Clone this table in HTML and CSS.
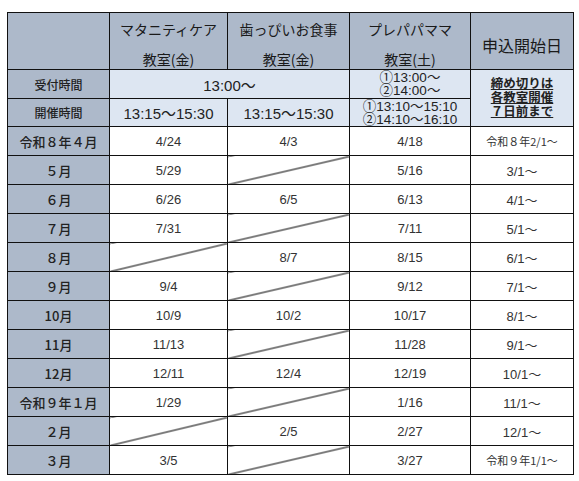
FILE: index.html
```html
<!DOCTYPE html>
<html lang="ja">
<head>
<meta charset="utf-8">
<link rel="stylesheet" href="styles.css">
</head>
<body>
<table class="sched">
  <colgroup>
    <col class="c1"><col class="c2"><col class="c3"><col class="c4"><col class="c5">
  </colgroup>
  <thead>
    <tr class="hrow">
      <th class="hd"></th>
      <th class="hd"><div class="hl">マタニティケア</div><div class="hl">教室(金)</div></th>
      <th class="hd"><div class="hl">歯っぴいお食事</div><div class="hl">教室(金)</div></th>
      <th class="hd"><div class="hl">プレパパママ</div><div class="hl">教室(土)</div></th>
      <th class="hd big"><div class="hl">申込開始日</div></th>
    </tr>
  </thead>
  <tbody>
    <tr class="r1">
      <th class="lab sm">受付時間</th>
      <td class="lt time" colspan="2">13:00〜</td>
      <td class="lt two">①13:00〜<br>②14:00〜</td>
      <td class="lt note" rowspan="2"><span>締め切りは<br>各教室開催<br>７日前まで</span></td>
    </tr>
    <tr class="r2">
      <th class="lab sm">開催時間</th>
      <td class="lt time">13:15〜15:30</td>
      <td class="lt time">13:15〜15:30</td>
      <td class="lt two">①13:10〜15:10<br>②14:10〜16:10</td>
    </tr>
    <tr class="m"><th class="lab">令和８年４月</th><td>4/24</td><td>4/3</td><td>4/18</td><td class="ja">令和８年2/1〜</td></tr>
    <tr class="m"><th class="lab">５月</th><td>5/29</td><td class="na"></td><td>5/16</td><td>3/1〜</td></tr>
    <tr class="m"><th class="lab">６月</th><td>6/26</td><td>6/5</td><td>6/13</td><td>4/1〜</td></tr>
    <tr class="m"><th class="lab">７月</th><td>7/31</td><td class="na"></td><td>7/11</td><td>5/1〜</td></tr>
    <tr class="m"><th class="lab">８月</th><td class="na"></td><td>8/7</td><td>8/15</td><td>6/1〜</td></tr>
    <tr class="m"><th class="lab">９月</th><td>9/4</td><td class="na"></td><td>9/12</td><td>7/1〜</td></tr>
    <tr class="m"><th class="lab">10月</th><td>10/9</td><td>10/2</td><td>10/17</td><td>8/1〜</td></tr>
    <tr class="m"><th class="lab">11月</th><td>11/13</td><td class="na"></td><td>11/28</td><td>9/1〜</td></tr>
    <tr class="m"><th class="lab">12月</th><td>12/11</td><td>12/4</td><td>12/19</td><td>10/1〜</td></tr>
    <tr class="m"><th class="lab">令和９年１月</th><td>1/29</td><td class="na"></td><td>1/16</td><td>11/1〜</td></tr>
    <tr class="m"><th class="lab">２月</th><td class="na"></td><td>2/5</td><td>2/27</td><td>12/1〜</td></tr>
    <tr class="m"><th class="lab">３月</th><td>3/5</td><td class="na"></td><td>3/27</td><td class="ja">令和９年1/1〜</td></tr>
  </tbody>
</table>
</body>
</html>
```
FILE: styles.css
```css
html, body {
  margin: 0;
  padding: 0;
  background: #ffffff;
}
body {
  padding: 12px 0 0 7px;
  font-family: "Noto Sans CJK JP", "Noto Sans", sans-serif;
  color: #222;
}
.sched {
  border-collapse: collapse;
  table-layout: fixed;
  width: 566px;
}
.c1 { width: 102px; }
.c2 { width: 118px; }
.c3 { width: 122px; }
.c4 { width: 121px; }
.c5 { width: 103px; }
.sched th, .sched td {
  border: 1px solid #111;
  padding: 0;
  text-align: center;
  vertical-align: middle;
}
.hd {
  background: #adb9ca;
  height: 56px;
  font-weight: 400;
  font-size: 14px;
  color: #1a1a1a;
  vertical-align: top;
}
.hl {
  height: 16px;
  line-height: 16px;
  margin-top: 6px;
}
.hd .hl + .hl { margin-top: 14px; }
.big { font-size: 16px; }
.big .hl { margin-top: 8px; height: 18px; line-height: 18px; }
.lab {
  background: #adb9ca;
  font-weight: 500;
  font-size: 13px;
  color: #222;
}
.lab.sm { font-size: 12px; }
.lt {
  background: #dde6f2;
}
.r1 th, .r1 td { height: 28px; }
.r2 th, .r2 td { height: 27px; }
.time {
  font-family: "Liberation Sans", "Noto Sans CJK JP", sans-serif;
  font-size: 15px;
  color: #222;
}
.two {
  font-family: "Liberation Sans", "Noto Sans CJK JP", sans-serif;
  font-size: 13.5px;
  line-height: 13px;
  color: #222;
}
.note span {
  display: inline-block;
  font-size: 12.5px;
  line-height: 14px;
  font-weight: 700;
  text-decoration: underline;
  color: #222;
}
.m th, .m td {
  height: 28px;
}
.m td {
  font-family: "Liberation Sans", "Noto Sans CJK JP", sans-serif;
  font-size: 13px;
  color: #333;
}
.m td.ja {
  font-family: "Noto Sans CJK JP", sans-serif;
  font-size: 11px;
}
.na {
  background: linear-gradient(to bottom right, transparent calc(50% - 1px), #000 50%, transparent calc(50% + 1px));
}
```
